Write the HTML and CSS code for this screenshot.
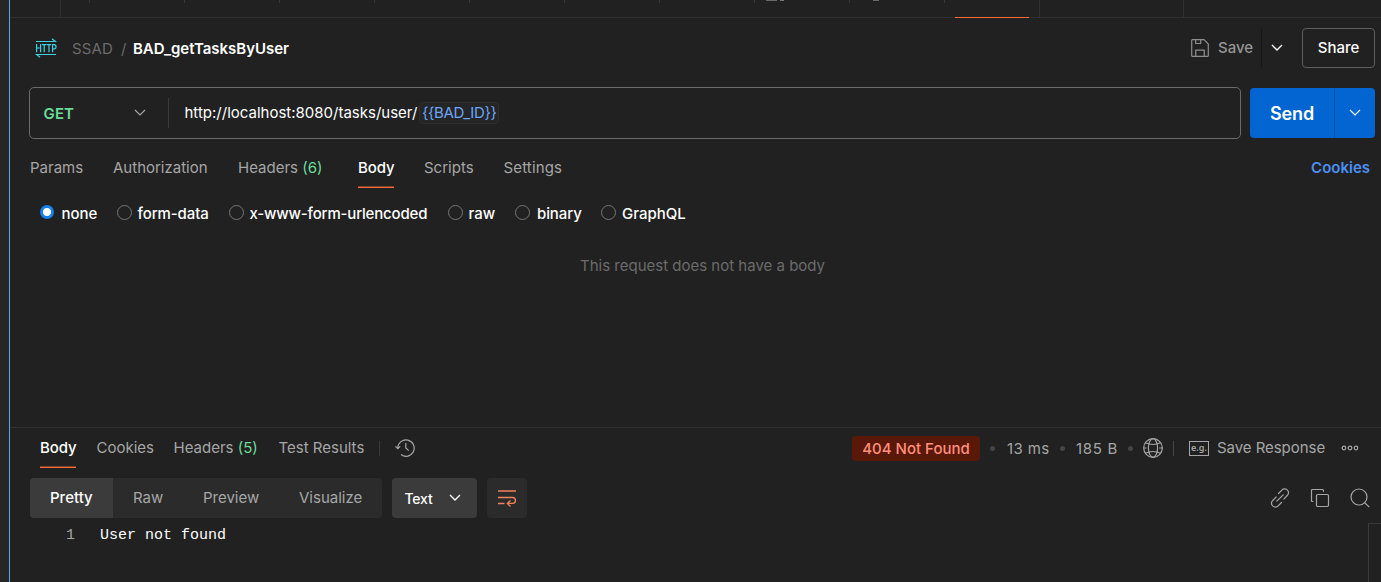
FILE: index.html
```html
<!DOCTYPE html>
<html lang="en">
<head>
<meta charset="utf-8">
<title>BAD_getTasksByUser</title>
<link rel="stylesheet" href="styles.css">
</head>
<body>
<div class="app">
  <aside class="sidebar"></aside>
  <main class="main">
    <div class="tabstrip">
      <div class="tab-first"></div>
      <div class="ticks"><i></i><i></i><i></i><i></i><i></i><i></i><i></i><i></i><i class="method-a"></i><i class="method-b"></i></div>
      <div class="tab-active"></div>
      <div class="tab-env"></div>
    </div>

    <header class="head">
      <svg class="http" width="22" height="20" viewBox="0 0 22 20" fill="none" stroke="#3fd0e2" stroke-width="1.2"><path d="M1 3.5H20.5L17 .7M21 16.5H1.5L5 19.3M1.6 6v8.2M5.6 6v8.2M1.6 10h4M7 6.6h4.4M9.2 6.6v7.6M11.8 6.6h4.4M14 6.6v7.6M17.6 14.2V6.6h1.5q1.9 0 1.9 2.1t-1.9 2.1h-1.5"/></svg>
      <span class="crumb"><span class="ssad">SSAD</span><span class="slash">/</span></span>
      <b class="title">BAD_getTasksByUser</b>
      <div class="save">
        <svg width="18" height="18" viewBox="0 0 18 18" fill="none" stroke="#8e8e8e" stroke-width="1.2"><path d="M1.5.7H13L17.3 5V16.5q0 .8-.8.8h-15q-.8 0-.8-.8v-15q0-.8.8-.8zM4.7.7v3.8h5V.7M4.7 17.3v-6.2h8.6v6.2"/></svg>
        <span>Save</span>
      </div>
      <div class="save-more"><svg width="12" height="8" viewBox="0 0 12 8" fill="none" stroke="#fff" stroke-width="1.4"><path d="M1 1l5 5 5-5"/></svg></div>
      <div class="share">Share</div>
    </header>

    <section class="request">
      <div class="urlbox">
        <span class="get">GET</span>
        <svg width="12" height="8" viewBox="0 0 12 8" fill="none" stroke="#a6a6a6" stroke-width="1.2"><path d="M1 1l5 5 5-5"/></svg>
        <span class="rule"></span>
        <span class="url">http://localhost:8080/tasks/user/</span><span class="var">{{BAD_ID}}</span>
      </div>
      <div class="send"><span class="send-label">Send</span><span class="send-more"><svg width="12" height="8" viewBox="0 0 12 8" fill="none" stroke="#fff" stroke-width="1.2"><path d="M1 1l5 5 5-5"/></svg></span></div>
    </section>

    <nav class="tabs req-tabs">
      <span class="t-params">Params</span><span class="t-auth">Authorization</span><span class="t-headers">Headers <em>(6)</em></span><span class="t-body on">Body</span><span class="t-scripts">Scripts</span><span class="t-settings">Settings</span>
      <b class="cookies">Cookies</b>
    </nav>

    <div class="radios">
      <label class="r1"><i class="dot checked"></i>none</label>
      <label class="r2"><i class="dot"></i>form-data</label>
      <label class="r3"><i class="dot"></i>x-www-form-urlencoded</label>
      <label class="r4"><i class="dot"></i>raw</label>
      <label class="r5"><i class="dot"></i>binary</label>
      <label class="r6"><i class="dot"></i>GraphQL</label>
    </div>
    <div class="empty"><span>This request does not have a body</span></div>

    <section class="response">
      <nav class="tabs res-tabs">
        <span class="s-body on">Body</span><span class="s-cookies">Cookies</span><span class="s-headers">Headers <em>(5)</em></span><span class="s-tests">Test Results</span>
        <svg class="history" width="20" height="20" viewBox="0 0 20 20" fill="none" stroke="#a6a6a6" stroke-width="1.2"><path d="M2.8 10A8.2 8.2 0 1 1 6 16.6M.4 8.3l2.4 2.4 2.4-2.4M10.8 5v5l3 2.6"/></svg>
        <div class="status">
          <span class="code">404 Not Found</span>
          <i class="sep"></i><span class="ms">13 ms</span><i class="sep"></i><span class="size">185 B</span><i class="sep"></i>
          <svg class="globe" width="20" height="20" viewBox="0 0 20 20" fill="none" stroke="#a6a6a6" stroke-width="1.2"><circle cx="10" cy="10" r="9.3"/><ellipse cx="10" cy="10" rx="4.6" ry="9.3"/><path d="M2.3 4.8q7.7 3.4 15.4 0M2.3 15.2q7.7-3.4 15.4 0M.7 10h3M16.3 10h3"/></svg>
          <i class="bar"></i>
          <span class="eg">e.g.</span>
          <span class="save-res">Save Response</span>
          <svg class="more" width="18" height="6" viewBox="0 0 18 6" fill="none" stroke="#a6a6a6" stroke-width="1.2"><circle cx="3" cy="3" r="1.8"/><circle cx="9" cy="3" r="1.8"/><circle cx="15" cy="3" r="1.8"/></svg>
        </div>
      </nav>
      <div class="toolbar">
        <div class="views"><span class="v1">Pretty</span><span class="v2">Raw</span><span class="v3">Preview</span><span class="v4">Visualize</span></div>
        <div class="format"><span>Text</span><svg width="12" height="8" viewBox="0 0 12 8" fill="none" stroke="#fff" stroke-width="1.4"><path d="M1 1l5 5 5-5"/></svg></div>
        <div class="wrap"><svg width="20" height="18" viewBox="0 0 20 18" fill="none" stroke="#f08258" stroke-width="1.3"><path d="M1 2h18M1 8.5h14.5a2.9 2.9 0 0 1 0 5.9H11M1 14.5h6.5M13.5 11.5l-3.2 3 3.2 3"/></svg></div>
        <div class="tools">
          <svg width="20" height="20" viewBox="0 0 20 20" fill="none" stroke="#a6a6a6" stroke-width="1.2" stroke-linecap="round"><path d="M6.8 13.2l6.4-6.4M8.5 5.5l3.3-3.3a3.8 3.8 0 0 1 5.9.3 3.8 3.8 0 0 1-.5 5l-3.4 3.6M11.5 14.5l-3.3 3.3a3.8 3.8 0 0 1-5.9-.3 3.8 3.8 0 0 1 .5-5l3.4-3.6"/></svg>
          <svg width="20" height="20" viewBox="0 0 20 20" fill="none" stroke="#a6a6a6" stroke-width="1.2"><rect x="6.5" y="6.5" width="12" height="12" rx="1.2"/><path d="M3.4 13.5H2.5q-1 0-1-1v-10q0-1 1-1h10q1 0 1 1v1.2"/></svg>
          <svg width="20" height="20" viewBox="0 0 20 20" fill="none" stroke="#a6a6a6" stroke-width="1.2"><circle cx="9" cy="9" r="8"/><path d="M14.7 14.7l4.6 4.4"/></svg>
        </div>
      </div>
      <div class="code-area">
        <span class="ln">1</span><code>User not found</code><div class="ruler"></div>
      </div>
    </section>
  </main>
</div>
</body>
</html>
```
FILE: styles.css
```css
* { box-sizing: border-box; }
body { margin: 0; background: #212121; color: #fff; font: 15px/20px Inter, sans-serif; overflow: hidden; }
svg { display: block; flex: none; }
.app { display: flex; height: 582px; width: 1381px; }
.sidebar { flex: none; width: 10px; background: #262626; border-right: 1px solid #6ba0e0; }
.main { width: 1371px; display: flex; flex-direction: column; white-space: nowrap; }

.tabstrip { height: 18px; flex: none; display: flex; border-bottom: 1px solid #303030; }
.tab-first { width: 51px; border-right: 1px solid #303030; }
.ticks { display: flex; width: 894px; }
.ticks i { width: 95px; height: 3px; border-right: 1px solid #383838; flex: none; }
.ticks i:first-child { width: 29px; }
.ticks .method-a { background: linear-gradient(#686868, #686868) 11px 0 / 11px 1px no-repeat, linear-gradient(#777, #777) 25px 0 / 4px 1px no-repeat; }
.ticks .method-b { background: linear-gradient(#686868, #686868) 23px 0 / 6px 1px no-repeat; }
.tab-active { width: 74px; height: 18px; border-bottom: 1px solid #ff6c37; flex: none; }
.tab-env { width: 145px; margin-left: 10px; border: solid #303030; border-width: 0 1px; }

.head { height: 50px; margin-bottom: 19px; padding: 10px 6px 0 25px; display: flex; align-items: center; flex: none; }
.crumb { color: #6b6b6b; margin-left: 15px; width: 61px; display: flex; padding-top: 2px; }
.ssad { width: 49px; letter-spacing: .1px; }
.title { font-weight: 600; padding-top: 2px; letter-spacing: -.02px; }
.save { margin-left: auto; display: flex; align-items: center; gap: 9px; color: #969696; font-weight: 500; width: 71px; height: 40px; border-right: 1px solid #181818; }
.save-more { width: 40px; padding-left: 9px; }
.share { width: 73px; height: 40px; border: 1px solid #5d5d5d; border-radius: 4px; display: grid; place-items: center; font-weight: 500; }

.request { display: flex; gap: 9px; padding-left: 19px; height: 52px; flex: none; align-items: center; }
.urlbox { width: 1212px; height: 52px; border: 1px solid #6b6b6b; border-radius: 5px; display: flex; align-items: center; padding-left: 13px; }
.get { color: #6bdd9a; font-weight: 600; width: 91px; padding: 2px 0 0 .5px; letter-spacing: .15px; }
.rule { width: 1px; height: 30px; background: #3a3a3a; margin: 0 15.5px 0 22px; }
.url { width: 234.5px; }
.var { color: #6ba6fa; background: #252525; border: 1px solid #2e2e2e; border-radius: 4px; height: 22px; line-height: 20px; padding-left: 2px; width: 80px; letter-spacing: -.37px; }
.send { width: 125px; height: 50px; background: #0265d2; border-radius: 4px; display: flex; }
.send-label { width: 85px; display: grid; place-items: center; padding-top: 2px; font-size: 18px; font-weight: 600; letter-spacing: -.1px; border-right: 1px solid #0350a4; }
.send-more { width: 40px; display: grid; place-items: center; }

.tabs { display: flex; color: #a6a6a6; }
.tabs em { font-style: normal; color: #6bdd9a; }
.tabs .on { color: #fff; font-weight: 500; letter-spacing: -.1px; background: linear-gradient(#7c402c 50%, #ff6c37 50%) 0 100% / 100% 2px no-repeat; }
.req-tabs { height: 49px; flex: none; padding: 19px 11px 0 20px; }
.req-tabs > span { height: 30px; }
.t-params { width: 83px; }
.t-auth { width: 125px; }
.t-headers { width: 120px; }
.t-body { width: 36px; margin-right: 30px; }
.t-scripts { width: 79.5px; }
.t-settings { letter-spacing: .15px; }
.cookies { margin-left: auto; font-weight: 600; color: #4a90f5; }

.radios { display: flex; padding: 15px 0 0 30px; height: 39px; flex: none; font-weight: 500; }
.radios label { display: flex; align-items: center; gap: 6px; height: 20px; padding-top: 1px; }
.dot { width: 15px; height: 15px; border: 1px solid #757575; border-radius: 50%; margin-bottom: 2px; flex: none; }
.dot.checked { border: 3.5px solid #1480ee; background: #fff; width: 14px; height: 14px; margin-bottom: 4px; }
.radios .r1 { width: 76.5px; gap: 7.5px; }
.r2 { width: 112px; letter-spacing: -.1px; }
.r3 { width: 219px; letter-spacing: -.18px; }
.r4 { width: 67.5px; }
.radios .r5 { width: 86px; letter-spacing: -.1px; gap: 7px; }
.empty { height: 200px; flex: none; padding: 29px 0 0 570px; color: #6b6b6b; }

.response { border-top: 1px solid #303030; flex: 1; }
.res-tabs { padding: 10px 0 0 30px; height: 50px; }
.res-tabs > span { height: 30px; }
.s-body { width: 36px; margin-right: 20.5px; }
.s-cookies { width: 77px; }
.s-headers { width: 105px; }
.res-tabs .s-tests { width: 101.5px; height: 15px; margin-top: 3px; line-height: 14px; border-right: 1px solid #3a3a3a; }
.history { margin-left: 15px; }
.status { margin-left: auto; width: 529px; height: 20px; display: flex; align-items: center; }
.code { width: 128px; height: 25px; flex: none; border-radius: 4px; background: #5a1908; color: #ff8f7f; text-align: center; line-height: 25px; font-weight: 500; margin-right: 10px; }
.sep { width: 5px; height: 5px; border-radius: 50%; background: #454545; flex: none; }
.ms { width: 53px; margin-left: 12px; padding-top: 1px; letter-spacing: .4px; }
.size { width: 52px; margin-left: 11px; padding-top: 1px; letter-spacing: .7px; }
.globe { margin-left: 10px; }
.bar { width: 1px; height: 15px; background: #454545; margin: 0 15px 0 10px; flex: none; }
.eg { width: 20px; height: 15px; border: 1px solid #a6a6a6; font: 600 9px/11px "Noto Sans", sans-serif; text-align: center; flex: none; }
.save-res { margin-left: 8px; width: 124px; letter-spacing: -.05px; }

.toolbar { display: flex; height: 40px; padding-left: 20px; }
.views { display: flex; width: 352px; background: #2b2b2b; color: #a6a6a6; border-radius: 4px; overflow: hidden; line-height: 40px; }
.v1 { width: 83px; background: #3b3b3b; color: #fff; font-weight: 500; padding-left: 20px; }
.v2 { width: 70px; padding-left: 20px; }
.v3 { width: 96px; padding-left: 20px; }
.v4 { padding-left: 20px; }
.format { width: 85px; margin: 0 10px; background: #3b3b3b; border-radius: 4px; display: flex; align-items: center; padding-left: 12.5px; font-weight: 500; font-size: 14px; }
.format span { width: 44.5px; letter-spacing: -.2px; padding-top: 1px; }
.wrap { width: 40px; background: #2b2b2b; border-radius: 4px; display: grid; place-items: center; }
.tools { margin-left: auto; display: flex; align-items: center; gap: 20px; padding-right: 11px; }
.code-area { display: flex; padding: 7px 0 0 56px; font: 15px/20px "Liberation Mono", monospace; }
.ln, code { padding-top: 1px; font: inherit; }
.ln { color: #a6a6a6; width: 34px; }
.ruler { margin: -2px 0 0 auto; width: 13px; height: 59px; border: solid #3a3a3a; border-width: 1px 0 0 1px; }
```
